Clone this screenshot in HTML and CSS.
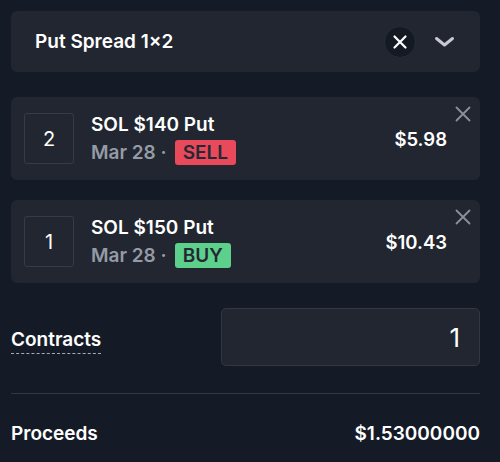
FILE: index.html
```html
<!DOCTYPE html>
<html>
<head>
<meta charset="utf-8">
<link rel="stylesheet" href="styles.css">
</head>
<body>
<div class="panel">
  <div class="header">
    <div class="title">Put Spread 1×2</div>
    <div class="header-actions">
      <button class="clear-btn" aria-label="Clear">
        <svg width="16" height="16" viewBox="0 0 16 16"><path d="M2.5 2.5 L13.5 13.5 M13.5 2.5 L2.5 13.5" stroke="#ffffff" stroke-width="2.2" stroke-linecap="round"/></svg>
      </button>
      <span class="chevron">
        <svg width="21" height="12" viewBox="0 0 21 12"><path d="M2.5 2.5 L10.5 9 L18.5 2.5" fill="none" stroke="#c9cacf" stroke-width="3" stroke-linecap="round" stroke-linejoin="round"/></svg>
      </span>
    </div>
  </div>

  <div class="leg">
    <div class="qty">2</div>
    <div class="leg-info">
      <div class="leg-name">SOL $140 Put</div>
      <div class="leg-meta"><span class="date">Mar 28 ·</span><span class="badge sell">SELL</span></div>
    </div>
    <div class="price">$5.98</div>
    <span class="remove">
      <svg width="16" height="16" viewBox="0 0 16 16"><path d="M1.5 1.5 L14.5 14.5 M14.5 1.5 L1.5 14.5" stroke="#8b909a" stroke-width="1.8" stroke-linecap="round"/></svg>
    </span>
  </div>

  <div class="leg">
    <div class="qty">1</div>
    <div class="leg-info">
      <div class="leg-name">SOL $150 Put</div>
      <div class="leg-meta"><span class="date">Mar 28 ·</span><span class="badge buy">BUY</span></div>
    </div>
    <div class="price">$10.43</div>
    <span class="remove">
      <svg width="16" height="16" viewBox="0 0 16 16"><path d="M1.5 1.5 L14.5 14.5 M14.5 1.5 L1.5 14.5" stroke="#8b909a" stroke-width="1.8" stroke-linecap="round"/></svg>
    </span>
  </div>

  <div class="contracts">
    <span class="contracts-label">Contracts</span>
    <div class="contracts-input">1</div>
  </div>

  <div class="divider"></div>

  <div class="proceeds">
    <span>Proceeds</span>
    <span>$1.53000000</span>
  </div>
</div>
</body>
</html>
```

FILE: styles.css
```css
* { box-sizing: border-box; }
html, body {
  margin: 0;
  padding: 0;
  background: #151b26;
  font-family: Inter, "Noto Sans", sans-serif;
  color: #ffffff;
}
.panel {
  width: 469px;
  margin: 11px 0 0 11px;
  display: flex;
  flex-direction: column;
}
.header {
  height: 61px;
  background: #212630;
  border-radius: 6px;
  display: flex;
  align-items: center;
  justify-content: space-between;
  padding: 0 25px 0 24px;
  margin-bottom: 25px;
}
.title {
  font-size: 19px;
  font-weight: 600;
}
.header-actions {
  display: flex;
  align-items: center;
  gap: 18px;
}
.clear-btn {
  width: 32px;
  height: 32px;
  border-radius: 50%;
  background: #141a24;
  border: 1px solid #272c36;
  display: flex;
  align-items: center;
  justify-content: center;
  padding: 0;
  margin: 0;
}
.clear-btn svg, .chevron svg, .remove svg { display: block; }
.chevron { display: flex; align-items: center; }
.leg {
  position: relative;
  height: 83px;
  background: #212630;
  border-radius: 6px;
  display: flex;
  align-items: center;
  padding: 0 33px 0 13px;
  margin-bottom: 20px;
}
.qty {
  width: 50px;
  height: 51px;
  border: 1px solid #363b46;
  border-radius: 3px;
  display: flex;
  align-items: center;
  justify-content: center;
  font-size: 20px;
  font-weight: 400;
  flex-shrink: 0;
}
.leg-info {
  margin-left: 17px;
  display: flex;
  flex-direction: column;
  gap: 4px;
  flex: 1;
}
.leg-name {
  font-size: 19px;
  font-weight: 600;
  line-height: 23px;
}
.leg-meta {
  display: flex;
  align-items: center;
  gap: 8px;
}
.date {
  color: #959ba6;
  font-size: 19px;
  font-weight: 600;
}
.badge {
  display: inline-block;
  height: 25px;
  line-height: 25px;
  padding: 0 8px;
  border-radius: 3px;
  font-size: 19px;
  font-weight: 600;
  color: #242834;
}
.badge.sell { background: #e8495b; }
.badge.buy { background: #5dd18b; }
.price {
  font-size: 18.5px;
  font-weight: 600;
}
.remove {
  position: absolute;
  top: 9px;
  right: 9px;
}
.contracts {
  display: flex;
  align-items: center;
  justify-content: space-between;
  margin-top: 5px;
}
.contracts-label {
  font-size: 19px;
  font-weight: 600;
  border-bottom: 1px dashed #a7abb3;
  padding-bottom: 2px;
  margin-top: 8px;
}
.contracts-input {
  width: 259px;
  height: 58px;
  background: #212630;
  border: 1px solid #323743;
  border-radius: 5px;
  display: flex;
  align-items: center;
  justify-content: flex-end;
  padding-right: 19px;
  font-size: 26px;
  font-weight: 400;
}
.divider {
  height: 1px;
  background: #323743;
  margin-top: 27px;
}
.proceeds {
  display: flex;
  justify-content: space-between;
  align-items: center;
  margin-top: 28px;
  font-size: 19px;
  font-weight: 600;
}
```
